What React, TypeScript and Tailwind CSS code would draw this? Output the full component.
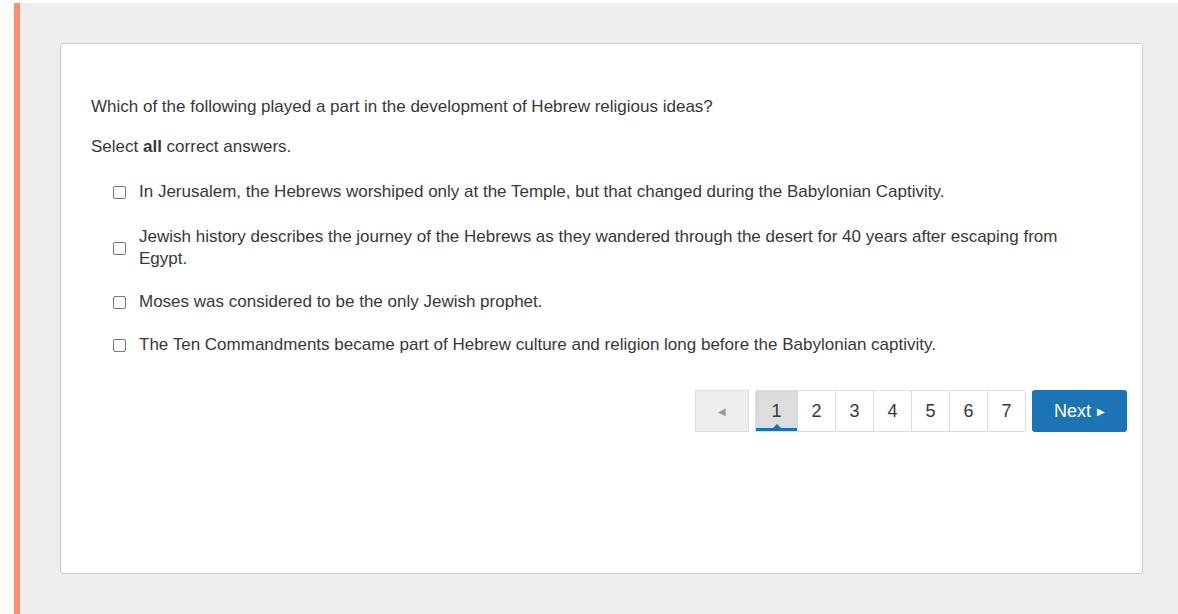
import React from "react";

const options = [
  "In Jerusalem, the Hebrews worshiped only at the Temple, but that changed during the Babylonian Captivity.",
  "Jewish history describes the journey of the Hebrews as they wandered through the desert for 40 years after escaping from Egypt.",
  "Moses was considered to be the only Jewish prophet.",
  "The Ten Commandments became part of Hebrew culture and religion long before the Babylonian captivity.",
];

export default function App() {
  return (
    <div
      className="w-[1178px] h-[614px] bg-white pt-[3px] pl-[14px] flex overflow-hidden"
      style={{ fontFamily: '"Liberation Sans", Arial, sans-serif' }}
    >
      <div className="w-[6px] bg-[#fa8f6f] shrink-0" />
      <div className="flex-1 bg-[#eeeeee] pt-[40px] pl-[40px] pr-[35px] pb-[40px]">
        <div className="h-[531px] bg-white border border-[#cccccc] rounded-[3px] px-[15px] pt-[52px] text-[#383838]">
          <div className="px-[15px]">
            <p className="text-[17px] leading-[22px]">
              Which of the following played a part in the development of Hebrew religious ideas?
            </p>
            <p className="text-[17px] leading-[22px] mt-[18px]">
              Select <b>all</b> correct answers.
            </p>
            <div className="mt-[23px] pl-[22px] pr-[22px] flex flex-col gap-[21px]">
              {options.map((o, i) => (
                <label key={i} className={i === 1 ? "flex items-center mt-[2px]" : "flex items-center"}>
                  <span className="w-[13px] h-[13px] border border-[#767676] rounded-[2px] shrink-0 bg-white" />
                  <span className="ml-[13px] text-[17px] leading-[22px]">{o}</span>
                </label>
              ))}
            </div>
          </div>
          <div className="mt-[34px] flex justify-end items-stretch h-[42px]">
            <button className="w-[54px] h-[42px] bg-[#eeeeee] border border-[#dddddd] flex items-center justify-center text-[#999999] text-[10px]">
              ◀
            </button>
            <div className="ml-[6px] flex h-[42px] border border-[#dddddd] rounded-[2px]">
              <div className="relative w-[41px] bg-[#dddddd] flex items-center justify-center text-[18px] shadow-[inset_0_0_2px_rgba(0,0,0,0.1)]">
                1
                <div className="absolute left-0 right-0 bottom-0 h-[3px] bg-[#1a73b4]" />
                <div className="absolute left-1/2 -translate-x-1/2 bottom-[3px] w-0 h-0 border-l-[4px] border-r-[4px] border-b-[4px] border-l-transparent border-r-transparent border-b-[#1a73b4]" />
              </div>
              {[2, 3, 4, 5, 6, 7].map((n) => (
                <div
                  key={n}
                  className="w-[38px] border-l border-[#dddddd] flex items-center justify-center text-[18px] bg-white"
                >
                  {n}
                </div>
              ))}
            </div>
            <button className="ml-[6px] w-[95px] h-[42px] bg-[#1b75b5] rounded-[3px] text-white text-[18px] flex items-center justify-center gap-[6px]">
              Next <span className="text-[10px]">▶</span>
            </button>
          </div>
        </div>
      </div>
    </div>
  );
}
